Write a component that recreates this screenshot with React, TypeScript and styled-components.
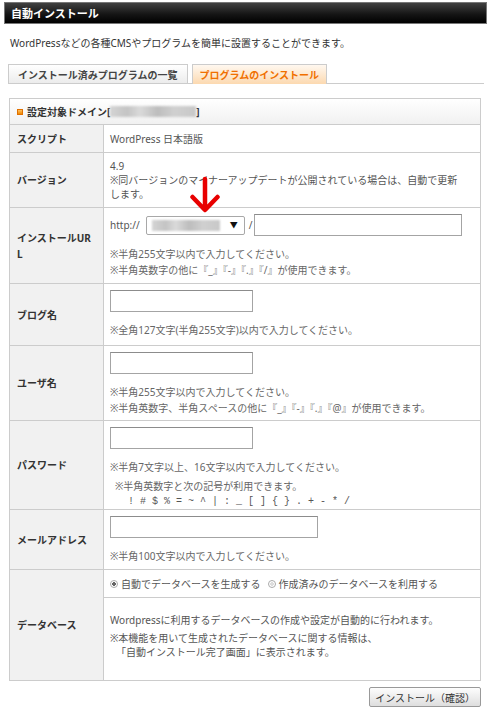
import styled, { createGlobalStyle } from "styled-components";

const GlobalStyle = createGlobalStyle`
  body {
    margin: 0;
    background: #fff;
    font-family: "Noto Sans", "Noto Sans CJK JP", sans-serif;
    font-size: 10px;
    color: #333;
  }
`;

interface Field {
  label: React.ReactNode;
  height: number;
  inputWidth: number;
  hints: React.ReactNode[];
}

const fields: Field[] = [
  {
    label: "ブログ名",
    height: 62,
    inputWidth: 143,
    hints: ["※全角127文字(半角255文字)以内で入力してください。"],
  },
  {
    label: "ユーザ名",
    height: 75,
    inputWidth: 143,
    hints: [
      "※半角255文字以内で入力してください。",
      "※半角英数字、半角スペースの他に『_』『-』『.』『@』が使用できます。",
    ],
  },
];

export default function App() {
  return (
    <Page>
      <GlobalStyle />
      <TitleBar>自動インストール</TitleBar>
      <Lead>WordPressなどの各種CMSやプログラムを簡単に設置することができます。</Lead>

      <Tabs>
        <Tab>インストール済みプログラムの一覧</Tab>
        <Tab $active>プログラムのインストール</Tab>
      </Tabs>

      <Panel>
        <DomainBar>
          <Bullet />
          設定対象ドメイン[<Blurred $w={86} />]
        </DomainBar>

        <Table>
          <Row $h={28}>
            <Label>スクリプト</Label>
            <Cell $center>WordPress 日本語版</Cell>
          </Row>

          <Row $h={55}>
            <Label>バージョン</Label>
            <Cell>
              <Text>4.9</Text>
              <Text>※同バージョンのマイナーアップデートが公開されている場合は、自動で更新します。</Text>
            </Cell>
          </Row>

          <Row $h={76}>
            <Label>
              インストールUR
              <br />L
            </Label>
            <Cell>
              <UrlLine>
                <UrlText>http://</UrlText>
                <Select>
                  <Blurred $w={68} />
                  <Caret>▼</Caret>
                </Select>
                <UrlText $slash>/</UrlText>
                <Input $w={208} />
              </UrlLine>
              <Hints>
                <Hint>※半角255文字以内で入力してください。</Hint>
                <Hint>※半角英数字の他に『_』『-』『.』『/』が使用できます。</Hint>
              </Hints>
            </Cell>
          </Row>

          {fields.map((f, i) => (
            <Row key={i} $h={f.height}>
              <Label>{f.label}</Label>
              <Cell>
                <Input $w={f.inputWidth} />
                <Hints>
                  {f.hints.map((h, j) => (
                    <Hint key={j}>{h}</Hint>
                  ))}
                </Hints>
              </Cell>
            </Row>
          ))}

          <Row $h={89}>
            <Label>パスワード</Label>
            <Cell>
              <Input $w={143} />
              <Hints>
                <Hint>※半角7文字以上、16文字以内で入力してください。</Hint>
                <Hint $indent={5} $gap={3}>※半角英数字と次の記号が利用できます。</Hint>
                <Symbols>! # $ % = ~ ^ | : _ [ ] {"{"} {"}"} . + - * /</Symbols>
              </Hints>
            </Cell>
          </Row>

          <Row $h={60}>
            <Label>メールアドレス</Label>
            <Cell>
              <Input $w={208} />
              <Hints>
                <Hint>※半角100文字以内で入力してください。</Hint>
              </Hints>
            </Cell>
          </Row>

          <Row $h={111}>
            <Label>データベース</Label>
            <DbCell>
              <RadioLine>
                <Radio $checked />
                <RadioText $gap={7}>自動でデータベースを生成する</RadioText>
                <Radio />
                <RadioText>作成済みのデータベースを利用する</RadioText>
              </RadioLine>
              <DbNote>
                <Text>Wordpressに利用するデータベースの作成や設定が自動的に行われます。</Text>
                <NoteGroup>
                  <Text>※本機能を用いて生成されたデータベースに関する情報は、</Text>
                  <Text $indent={6}>「自動インストール完了画面」に表示されます。</Text>
                </NoteGroup>
              </DbNote>
            </DbCell>
          </Row>
        </Table>

        <Arrow viewBox="0 0 30 38" width="30" height="38">
          <path
            d="M15 3 L15 33 M2.5 21 L15 34 L27.5 21"
            fill="none"
            stroke="#e80000"
            strokeWidth="4.5"
            strokeLinecap="round"
            strokeLinejoin="round"
          />
        </Arrow>

        <Footer>
          <Button type="button">インストール（確認）</Button>
        </Footer>
      </Panel>
    </Page>
  );
}

const Page = styled.div`
  width: 483px;
  padding: 2px 8px 0 4px;
`;

const TitleBar = styled.div`
  box-sizing: border-box;
  height: 22px;
  display: flex;
  align-items: center;
  padding-left: 6px;
  border: 1px solid #777;
  background: linear-gradient(#404040, #161616 55%, #000);
  color: #fff;
  font-family: "Noto Sans CJK JP", sans-serif;
  font-size: 11px;
  font-weight: bold;
`;

const Lead = styled.p`
  margin: 12px 0 0 6px;
  line-height: 14px;
  color: #333;
`;

const Tabs = styled.div`
  display: flex;
  align-items: flex-end;
  gap: 4px;
  margin: 14px 3px 0 4px;
  border-bottom: 1px solid #ccc;
`;

const Tab = styled.div<{ $active?: boolean }>`
  box-sizing: border-box;
  display: flex;
  align-items: center;
  padding: 0 ${(p) => (p.$active ? 7 : 9)}px;
  border: 1px solid #ccc;
  border-bottom: none;
  background: ${(p) =>
    p.$active ? "linear-gradient(#fff8f0, #fcd9b0)" : "linear-gradient(#fff, #ececec)"};
  color: ${(p) => (p.$active ? "#f07000" : "#444")};
  font-weight: bold;
  margin-bottom: ${(p) => (p.$active ? "-1px" : "0")};
  height: ${(p) => (p.$active ? "20px" : "19px")};
`;

const Panel = styled.div`
  position: relative;
  width: 472px;
  margin: 14px 0 0 5px;
`;

const DomainBar = styled.div`
  box-sizing: border-box;
  height: 26px;
  display: flex;
  align-items: center;
  padding-left: 6px;
  border: 1px solid #ccc;
  border-bottom: none;
  background: linear-gradient(#fff, #f1f1f1);
  font-weight: bold;
  color: #333;
`;

const Bullet = styled.span`
  width: 6px;
  height: 6px;
  margin: 0 4px 0 1px;
  background: linear-gradient(#ffc060, #f08800);
  border: 1px solid #e07000;
  box-sizing: border-box;
`;

const Blurred = styled.span<{ $w: number }>`
  display: inline-block;
  width: ${(p) => p.$w}px;
  height: 11px;
  background: linear-gradient(
    90deg,
    #d4d4d4 0%,
    #c4c4c4 20%,
    #dadada 35%,
    #bdbdbd 55%,
    #d0d0d0 75%,
    #c8c8c8 100%
  );
  filter: blur(1px);
`;

const Table = styled.div`
  border: 1px solid #ccc;
  border-top: none;
`;

const Row = styled.div<{ $h: number }>`
  box-sizing: border-box;
  display: grid;
  grid-template-columns: 94px 1fr;
  min-height: ${(p) => p.$h}px;
  border-top: 1px solid #ccc;
`;

const Label = styled.div`
  display: flex;
  align-items: center;
  padding-left: 7px;
  line-height: 16px;
  background: #f1f1f1;
  border-right: 1px solid #ccc;
  font-weight: bold;
  color: #333;
`;

const Cell = styled.div<{ $center?: boolean }>`
  display: flex;
  flex-direction: column;
  justify-content: ${(p) => (p.$center ? "center" : "flex-start")};
  padding: ${(p) => (p.$center ? "0 16px 0 6px" : "6px 16px 0 6px")};
  color: #555;
  line-height: 14px;
`;

const Text = styled.div<{ $indent?: number }>`
  line-height: 14px;
  padding-left: ${(p) => p.$indent ?? 0}px;
`;

const UrlLine = styled.div`
  display: flex;
  align-items: center;
`;

const UrlText = styled.span<{ $slash?: boolean }>`
  margin: ${(p) => (p.$slash ? "0 2px 0 4px" : "0 6px 0 0")};
`;

const Select = styled.div`
  box-sizing: border-box;
  width: 99px;
  height: 19px;
  display: flex;
  align-items: center;
  justify-content: space-between;
  padding: 0 6px 0 5px;
  border: 1px solid #a8a8a8;
  border-radius: 2px;
  background: #fff;
`;

const Caret = styled.span`
  font-size: 8px;
  color: #111;
`;

const Input = styled.input.attrs({ type: "text" })<{ $w: number }>`
  box-sizing: border-box;
  width: ${(p) => p.$w}px;
  height: 22px;
  margin: 0;
  border: 1px solid #a4a4a4;
  border-top-color: #8c8c8c;
  background: #fff;
`;

const Hints = styled.div`
  margin-top: 10px;
`;

const Hint = styled.div<{ $indent?: number; $gap?: number }>`
  line-height: 16px;
  color: #666;
  padding-left: ${(p) => p.$indent ?? 0}px;
  margin-top: ${(p) => p.$gap ?? 0}px;
`;

const Symbols = styled.div`
  padding-left: 18px;
  line-height: 15px;
  font-family: "Liberation Mono", monospace;
  font-size: 10px;
  color: #555;
`;

const DbCell = styled.div`
  display: flex;
  flex-direction: column;
  color: #555;
`;

const RadioLine = styled.div`
  box-sizing: border-box;
  height: 28px;
  display: flex;
  align-items: center;
  padding-left: 6px;
  border-bottom: 1px solid #ccc;
`;

const Radio = styled.span<{ $checked?: boolean }>`
  box-sizing: border-box;
  width: 8px;
  height: 8px;
  margin-right: 3px;
  border-radius: 50%;
  border: 1px solid #aaa;
  background: ${(p) =>
    p.$checked
      ? "radial-gradient(circle, #666 0 1.6px, #fff 2px)"
      : "radial-gradient(circle, #ddd 0 1.6px, #fff 2px)"};
`;

const RadioText = styled.span<{ $gap?: number }>`
  margin-right: ${(p) => p.$gap ?? 0}px;
`;

const DbNote = styled.div`
  padding: 15px 8px 0 6px;
`;

const NoteGroup = styled.div`
  margin-top: 4px;
`;

const Arrow = styled.svg`
  position: absolute;
  left: 181px;
  top: 78px;
`;

const Footer = styled.div`
  display: flex;
  justify-content: flex-end;
  margin-top: 6px;
`;

const Button = styled.button`
  box-sizing: border-box;
  height: 20px;
  padding: 0 5px;
  white-space: nowrap;
  border: 1px solid #999;
  border-radius: 2px;
  background: linear-gradient(#fdfdfd, #dedede);
  font-family: "Noto Sans CJK JP", sans-serif;
  font-size: 10px;
  color: #333;
`;
